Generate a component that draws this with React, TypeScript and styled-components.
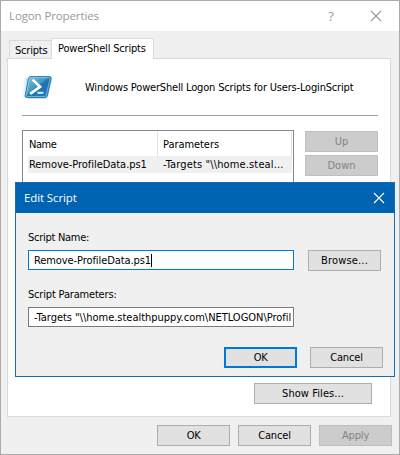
import React from 'react';
import styled, { createGlobalStyle, css } from 'styled-components';

const GlobalStyle = createGlobalStyle`
  * { box-sizing: border-box; }
  body {
    margin: 0;
    overflow: hidden;
    color: #000;
    font: 11px/14px 'DejaVu Sans Condensed', 'DejaVu Sans', sans-serif;
    white-space: pre;
  }
`;

const Window = styled.main`
  position: relative;
  display: flex;
  flex-direction: column;
  width: 400px;
  height: 455px;
  background: #f0f0f0;
  border: 1px solid #aaa;
`;

const Text = styled.span<{ $spacing?: number }>`
  letter-spacing: ${({ $spacing = 0 }) => $spacing}px;
`;

const TitleBar = styled.header<{ $active?: boolean }>`
  display: flex;
  align-items: center;
  height: 30px;
  padding: 0 8px;
  background: #fff;
  color: #999;
  font: 11.5px/16px 'Open Sans', sans-serif;
  letter-spacing: -0.12px;
  ${({ $active }) => $active && css`
    background: #0063b1;
    color: #fff;
  `}
`;

const Title = styled.h1`
  flex: 1;
  margin: 0;
  font: inherit;
`;

const CaptionButton = styled.button<{ $width: number }>`
  display: flex;
  align-items: center;
  justify-content: center;
  width: ${({ $width }) => $width}px;
  height: 28px;
  padding: 0;
  border: 0;
  background: none;
  color: inherit;
  font: 13px/16px 'Open Sans', sans-serif;
`;

const TabStrip = styled.nav`
  display: flex;
  align-items: flex-end;
  height: 28px;
  padding-left: 8px;
`;

const Tab = styled.div<{ $selected?: boolean }>`
  height: 19px;
  width: 42px;
  padding: 3px 0 0 5px;
  border: 1px solid #d9d9d9;
  border-width: 1px 0 0 1px;
  ${({ $selected }) => $selected && css`
    z-index: 1;
    width: 103px;
    height: 21px;
    padding: 3px 0 0 6px;
    border-width: 1px 1px 0;
    background: #fff;
  `}
`;

const Page = styled.section`
  display: flex;
  flex-direction: column;
  width: 384px;
  height: 359px;
  margin: -1px 0 0 6px;
  padding: 16px 12px 12px 14px;
  background: #fff;
  border: 1px solid #d9d9d9;
`;

const Banner = styled.div`
  display: flex;
  align-items: center;
  height: 41px;
  padding-bottom: 14px;
  border-bottom: 1px solid #a0a0a0;
`;

const BannerText = styled.span`
  margin-left: 31px;
  letter-spacing: -0.178px;
`;

const ListArea = styled.div`
  display: flex;
  gap: 10px;
  margin-top: 14px;
`;

const ListView = styled.div`
  width: 272px;
  height: 200px;
  padding-left: 5px;
  background: #fff;
  border: 1px solid #828790;
`;

const ListHeader = styled.div`
  display: grid;
  grid-template-columns: 130px 1fr;
  width: 264px;
  height: 25px;
  padding-top: 1px;
`;

const ColumnHead = styled.div`
  padding: 6px 0 0 1px;
  border-right: 1px solid #e2e2e2;
  & + & { padding-left: 5px; }
`;

const ListRow = styled.div`
  display: grid;
  grid-template-columns: 134px 1fr;
  width: 264px;
  height: 17px;
  padding-left: 1px;
  line-height: 18px;
  background: #f0f0f0;
`;

const SideButtons = styled.div`
  display: flex;
  flex-direction: column;
  gap: 3px;
  padding-top: 1px;
  margin-left: 1px;
`;

const Button = styled.button<{ $width?: number; $primary?: boolean }>`
  display: flex;
  align-items: center;
  justify-content: center;
  width: ${({ $width = 73 }) => $width}px;
  height: 21px;
  padding: 1px 0 0;
  background: #e1e1e1;
  border: 1px solid #adadad;
  color: #000;
  font: inherit;
  ${({ $primary }) => $primary && css`
    padding: 0;
    border: 2px solid #0078d7;
  `}
  &:disabled {
    background: #ccc;
    border-color: #bfbfbf;
    color: #838383;
  }
`;

const PageFooter = styled.div`
  display: flex;
  justify-content: flex-end;
  margin-top: auto;
  padding-right: 6px;
`;

const WindowFooter = styled.footer`
  display: flex;
  justify-content: flex-end;
  gap: 8px;
  padding: 8px 7px 0 0;
`;

const Dialog = styled.section`
  position: absolute;
  z-index: 2;
  left: 14px;
  top: 181px;
  width: 380px;
  height: 195px;
  background: #f0f0f0;
  border: 1px solid #156fb5;
`;

const Form = styled.div`
  display: grid;
  grid-template-columns: 266px 73px;
  column-gap: 14px;
  padding: 18px 0 0 12px;
`;

const FieldLabel = styled.label`
  grid-column: 1 / -1;
  height: 19px;
`;

const Field = styled.div<{ $focused?: boolean }>`
  display: flex;
  align-items: center;
  height: 20px;
  margin-bottom: 18px;
  padding: 2px 2px 0 5px;
  overflow: hidden;
  background: #fff;
  border: 1px solid ${({ $focused }) => ($focused ? '#0078d7' : '#7a7a7a')};
`;

const FieldValue = styled(Text)`
  flex: 0 1 auto;
  overflow: hidden;
`;

const Caret = styled.i`
  width: 1px;
  height: 13px;
  margin-bottom: 2px;
  background: #000;
`;

const DialogActions = styled.div`
  display: flex;
  justify-content: flex-end;
  gap: 13px;
  margin-top: 2px;
  padding-right: 11px;
`;

function CloseIcon() {
  return (
    <svg width="12" height="12" viewBox="0 0 12 12">
      <path d="M1 1 L11 11 M11 1 L1 11" stroke="currentColor" strokeWidth="1.1" />
    </svg>
  );
}

function PowerShellIcon() {
  return (
    <svg width="32" height="26" viewBox="0 0 32 26">
      <defs>
        <linearGradient id="shell" x1="0" y1="0" x2="1" y2="1">
          <stop offset="0" stopColor="#8cc3dc" />
          <stop offset="0.44" stopColor="#4598c4" />
          <stop offset="0.52" stopColor="#1d73ad" />
          <stop offset="1" stopColor="#2d77d0" />
        </linearGradient>
        <linearGradient id="trail" x1="0" x2="1">
          <stop offset="0" stopColor="#a9d8ec" stopOpacity="0" />
          <stop offset="1" stopColor="#5bb0d8" stopOpacity="0.8" />
        </linearGradient>
      </defs>
      <path d="M1 3H9L6 22H0Z" fill="url(#trail)" />
      <path d="M9 3H28.5Q30.5 3 30 5L26 22Q25.5 24 23.5 24H6Z" fill="#b9c0c6" opacity="0.6" />
      <path d="M8.5 1.6H27.4Q29.6 1.6 29.1 3.6L25.3 20.5Q24.8 22.5 22.8 22.5H4.8Q2.7 22.5 3.2 20.5L6.4 3.6Q6.9 1.6 8.5 1.6Z" fill="url(#shell)" stroke="#257da9" />
      <path d="M8.8 2.6H27.2Q28.3 2.6 28 3.8L24.3 20.2Q24 21.5 22.7 21.5H5.2Q4 21.5 4.3 20.3L7.4 3.8Q7.7 2.6 8.8 2.6Z" fill="none" stroke="#9ddcee" strokeWidth="0.8" opacity="0.75" />
      <path d="M10.6 4.6L18 11.9L8.2 18.8" fill="none" stroke="#fff" strokeWidth="2.7" />
      <path d="M15.4 17.8H21.4" stroke="#d8f0fa" strokeWidth="2" />
    </svg>
  );
}

function EditScriptDialog() {
  return (
    <Dialog>
      <TitleBar $active>
        <Title>Edit Script</Title>
        <CaptionButton $width={14}><CloseIcon /></CaptionButton>
      </TitleBar>
      <Form>
        <FieldLabel><Text $spacing={-0.28}>Script Name:</Text></FieldLabel>
        <Field $focused>
          <FieldValue $spacing={-0.09}>Remove-ProfileData.ps1</FieldValue>
          <Caret />
        </Field>
        <Button><Text $spacing={0.17}>Browse...</Text></Button>
        <FieldLabel><Text $spacing={-0.18}>Script Parameters:</Text></FieldLabel>
        <Field><FieldValue $spacing={-0.02}>{'-Targets "\\\\home.stealthpuppy.com\\NETLOGON\\Profil'}</FieldValue></Field>
      </Form>
      <DialogActions>
        <Button $primary><Text $spacing={-0.3}>OK</Text></Button>
        <Button><Text $spacing={-0.15}>Cancel</Text></Button>
      </DialogActions>
    </Dialog>
  );
}

export default function App() {
  return (
    <>
      <GlobalStyle />
      <Window>
        <TitleBar>
          <Title>Logon Properties</Title>
          <CaptionButton $width={60}>?</CaptionButton>
          <CaptionButton $width={30}><CloseIcon /></CaptionButton>
        </TitleBar>
        <TabStrip>
          <Tab><Text $spacing={-0.2}>Scripts</Text></Tab>
          <Tab $selected><Text $spacing={-0.18}>PowerShell Scripts</Text></Tab>
        </TabStrip>
        <Page>
          <Banner>
            <PowerShellIcon />
            <BannerText>Windows PowerShell Logon Scripts for Users-LoginScript</BannerText>
          </Banner>
          <ListArea>
            <ListView>
              <ListHeader>
                <ColumnHead><Text $spacing={-0.45}>Name</Text></ColumnHead>
                <ColumnHead><Text $spacing={-0.06}>Parameters</Text></ColumnHead>
              </ListHeader>
              <ListRow>
                <Text $spacing={-0.05}>Remove-ProfileData.ps1</Text>
                <Text $spacing={0.14}>{'-Targets "\\\\home.steal...'}</Text>
              </ListRow>
            </ListView>
            <SideButtons>
              <Button disabled>Up</Button>
              <Button disabled>Down</Button>
            </SideButtons>
          </ListArea>
          <PageFooter>
            <Button $width={118}><Text $spacing={0.08}>Show Files...</Text></Button>
          </PageFooter>
        </Page>
        <WindowFooter>
          <Button><Text $spacing={-0.3}>OK</Text></Button>
          <Button><Text $spacing={-0.15}>Cancel</Text></Button>
          <Button disabled><Text $spacing={-0.15}>Apply</Text></Button>
        </WindowFooter>
        <EditScriptDialog />
      </Window>
    </>
  );
}
